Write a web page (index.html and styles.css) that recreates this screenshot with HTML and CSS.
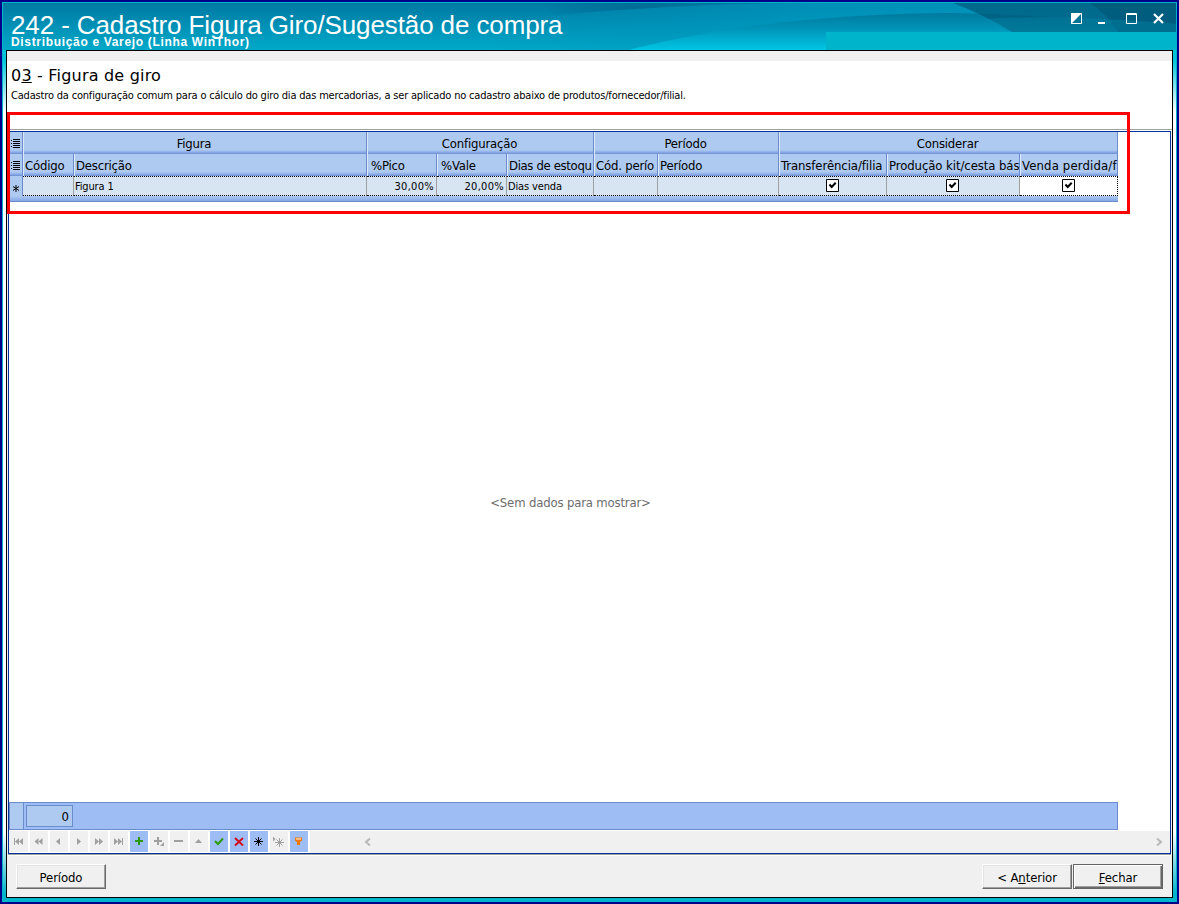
FILE: index.html
```html
<!DOCTYPE html>
<html lang="pt-BR">
<head>
    <meta charset="UTF-8">
    <title>242 - Cadastro Figura Giro/Sugestão de compra</title>
    <link rel="stylesheet" href="styles.css">
</head>
<body>
<div class="window">
    <header class="titlebar">
        <svg class="waves" width="1173" height="47" viewBox="3 3 1173 47">
            <defs>
                <linearGradient id="base" x1="0" y1="0" x2="0" y2="1">
                    <stop offset="0" stop-color="#0079a3"/>
                    <stop offset="1" stop-color="#00a9c9"/>
                </linearGradient>
                <linearGradient id="low" x1="0" y1="0" x2="0" y2="1">
                    <stop offset="0" stop-color="#007a9e"/>
                    <stop offset="0.4" stop-color="#0092b6"/>
                    <stop offset="1" stop-color="#00c6e4"/>
                </linearGradient>
                <linearGradient id="shade" x1="0" y1="0" x2="1" y2="0">
                    <stop offset="0" stop-color="#006a92" stop-opacity="0"/>
                    <stop offset="0.35" stop-color="#006a92" stop-opacity="0.8"/>
                    <stop offset="1" stop-color="#006a92" stop-opacity="0"/>
                </linearGradient>
                <linearGradient id="fade" x1="0" y1="0" x2="1" y2="0">
                    <stop offset="0" stop-color="#0093bb" stop-opacity="0"/>
                    <stop offset="0.5" stop-color="#0099c0"/>
                </linearGradient>
            </defs>
            <rect x="3" y="3" width="1173" height="47" fill="url(#base)"/>
            <path d="M480 50 L560 15 Q680 3 800 3 H1176 V50 Z" fill="url(#fade)" opacity="0.7"/>
            <path d="M540 3 H800 Q680 4 555 15 Z" fill="url(#shade)"/>
            <path d="M628 50 Q770 14 950 13 Q1060 14 1176 32 V50 Z" fill="url(#low)"/>
            <path d="M953 3 Q985 15 1012 32 H1176 V3 Z" fill="#00506f" opacity="0.6"/>
            <path d="M1090 3 Q1107 14 1118 32 H1176 V3 Z" fill="#00506f" opacity="0.5"/>
            <path d="M985 19 Q1060 14 1176 24 V32 H1012 Z" fill="#0090b0" opacity="0.35"/>
            <rect x="826" y="32" width="350" height="18" fill="#00b4cc"/>
        </svg>
        <div class="caption">
            <h1>242 - Cadastro Figura Giro/Sugestão de compra</h1>
            <p>Distribuição e Varejo (Linha WinThor)</p>
        </div>
        <svg class="controls" width="96" height="13" viewBox="0 0 96 13" fill="none" stroke="#fff">
            <path d="M.5 1.500h10v10h-10z"/>
            <path d="M0 1h11L0 12z" fill="#fff" stroke="none"/>
            <path d="M27 11h7" stroke-width="2"/>
            <path d="M55.500 1.500h10v10h-10zM55 2.500h11"/>
            <path d="M83 2l9 9M92 2l-9 9" stroke-width="2.200"/>
        </svg>
    </header>

    <main class="client">
        <div class="strip"></div>
        <section class="intro">
            <h2>0<u>3</u> - Figura de giro</h2>
            <p>Cadastro da configuração comum para o cálculo do giro dia das mercadorias, a ser aplicado no cadastro abaixo de produtos/fornecedor/filial.</p>
        </section>

        <section class="grid">
            <div class="bands row">
                <div class="mark"><svg width="9" height="9" shape-rendering="crispEdges"><path d="M2 .5h7M2 2.500h7M2 4.500h7M2 6.500h7M2 8.500h7M0 1.500h1M0 4.500h1M0 7.500h1" stroke="#000"/></svg></div>
                <div class="span2">Figura</div>
                <div class="span3">Configuração</div>
                <div class="span2">Período</div>
                <div class="span3">Considerar</div>
            </div>
            <div class="heads row">
                <div class="mark"><svg width="9" height="9" shape-rendering="crispEdges"><path d="M2 .5h7M2 2.500h7M2 4.500h7M2 6.500h7M2 8.500h7M0 1.500h1M0 4.500h1M0 7.500h1" stroke="#000"/></svg></div>
                <div>Código</div>
                <div>Descrição</div>
                <div class="percent">%Pico</div>
                <div class="percent">%Vale</div>
                <div class="narrow">Dias de estoqu</div>
                <div>Cód. perío</div>
                <div>Período</div>
                <div class="wide">Transferência/filia</div>
                <div class="wide">Produção kit/cesta bás</div>
                <div class="wider">Venda perdida/f</div>
            </div>
            <div class="data row">
                <div class="mark"><svg width="6" height="7" viewBox="0 0 6 7"><path d="M3 0v7M0 1.500l6 4M6 1.500l-6 4" stroke="#000"/></svg></div>
                <div></div>
                <div>Figura 1</div>
                <div class="num">30,00%</div>
                <div class="num">20,00%</div>
                <div>Dias venda</div>
                <div></div>
                <div></div>
                <div class="check"><svg width="13" height="13"><path d="M.5 .5h12v12h-12z" fill="#fff" stroke="#000"/><path d="M3.500 5.500l2.200 2.500l4-4.200" fill="none" stroke="#000" stroke-width="2"/></svg></div>
                <div class="check"><svg width="13" height="13"><path d="M.5 .5h12v12h-12z" fill="#fff" stroke="#000"/><path d="M3.500 5.500l2.200 2.500l4-4.200" fill="none" stroke="#000" stroke-width="2"/></svg></div>
                <div class="check focused"><svg width="13" height="13"><path d="M.5 .5h12v12h-12z" fill="#fff" stroke="#000"/><path d="M3.500 5.500l2.200 2.500l4-4.200" fill="none" stroke="#000" stroke-width="2"/></svg></div>
            </div>
            <div class="newrow-end"></div>

            <div class="empty"><span>&lt;Sem dados para mostrar&gt;</span></div>

            <div class="summary">
                <div class="summary-mark"></div>
                <div class="count">0</div>
            </div>

            <div class="navigator">
                <div class="nav-btn"><svg viewBox="0 0 18 21"><path class="line" d="M4.500 7v7"/><path d="M9 7v7l-4-3.500zM13 7v7l-4-3.500z"/></svg></div>
                <div class="nav-btn"><svg viewBox="0 0 18 21"><path d="M8.500 7v7l-4-3.500zM12.500 7v7l-4-3.500z"/></svg></div>
                <div class="nav-btn"><svg viewBox="0 0 18 21"><path d="M10 7v7l-4-3.500z"/></svg></div>
                <div class="nav-btn"><svg viewBox="0 0 18 21"><path d="M7 7v7l4-3.500z"/></svg></div>
                <div class="nav-btn"><svg viewBox="0 0 18 21"><path d="M5 7v7l4-3.500zM9 7v7l4-3.500z"/></svg></div>
                <div class="nav-btn"><svg viewBox="0 0 18 21"><path d="M4 7v7l4-3.500zM8 7v7l4-3.500z"/><path class="line" d="M12.500 7v7"/></svg></div>
                <div class="nav-btn on"><svg viewBox="0 0 18 21"><path class="green" d="M9 6v8M5 10h8"/></svg></div>
                <div class="nav-btn"><svg viewBox="0 0 18 21"><path class="thick" d="M8 6v8M4 10h8"/><path d="M14 11v4h-4z"/></svg></div>
                <div class="nav-btn"><svg viewBox="0 0 18 21"><path class="thick" d="M4 10h9"/></svg></div>
                <div class="nav-btn"><svg viewBox="0 0 18 21"><path d="M5 12h7l-3.500-4z"/></svg></div>
                <div class="nav-btn on"><svg viewBox="0 0 18 21"><path class="green" d="M5 10l3 3l5-5.500"/></svg></div>
                <div class="nav-btn on"><svg viewBox="0 0 18 21"><path class="red" d="M5 7l8 7.500M13 7l-8 7.500"/></svg></div>
                <div class="nav-btn on"><svg viewBox="0 0 18 21"><path class="line star" d="M8.500 6v9M4 10.500h9M5.500 7.500l6 6M11.500 7.500l-6 6"/></svg></div>
                <div class="nav-btn"><svg viewBox="0 0 18 21"><path d="M3 5.500v5l2.500-2.500z"/><path class="line" d="M9.500 7v9M5 11.500h9M6.500 8.500l6 6M12.500 8.500l-6 6"/></svg></div>
                <div class="nav-btn on"><svg viewBox="0 0 18 21"><path class="filter" d="M5 6.500h7v3l-2 1.500v3h-3v-3l-2-1.500z"/><path class="line shine" d="M6 8h5"/></svg></div>
                <div class="scroll">
                    <svg width="7" height="8"><path d="M6 .5l-4 3.500l4 3.500"/></svg>
                    <svg width="7" height="8"><path d="M1 .5l4 3.500l-4 3.500"/></svg>
                </div>
            </div>
        </section>

        <footer class="actions">
            <button type="button">Período</button>
            <div class="steps">
                <button type="button">&lt; A<u>n</u>terior</button>
                <button type="button" class="default"><u>F</u>echar</button>
            </div>
        </footer>
    </main>
    <div class="highlight"></div>
</div>
</body>
</html>
```
FILE: styles.css
```css
/* General Styles */
* {
    box-sizing: border-box;
}

body {
    margin: 0;
    font-family: "DejaVu Sans Condensed", "DejaVu Sans", sans-serif;
    font-size: 12px;
    color: #000;
}

h1, h2, p {
    margin: 0;
    font-weight: normal;
    white-space: nowrap;
}

u {
    text-underline-offset: 1px;
    text-decoration-skip-ink: none;
}

/* Window Frame */
.window {
    position: relative;
    width: 1179px;
    height: 904px;
    border: 2px solid #000088;
    background: linear-gradient(#00b4cc 0, #00c8dc 58px, #ffffff 110px, #ffffff 830px, #00b4cc 892px);
    box-shadow: inset 0 0 0 1px #00b4cc;
    padding: 1px 4px 4px;
    display: flex;
    flex-direction: column;
}

/* Title Bar */
.titlebar {
    position: relative;
    height: 47px;
    flex: none;
    display: flex;
    justify-content: space-between;
    color: #fff;
    font-family: "Liberation Sans", Arial, sans-serif;
}

.waves {
    position: absolute;
    left: -3px;
    top: 0;
}

.caption {
    position: relative;
    padding: 8px 0 0 5px;
}

.caption h1 {
    font-size: 26px;
    line-height: 28px;
    letter-spacing: -0.11px;
}

.caption p {
    font-size: 12px;
    font-weight: bold;
    line-height: 14px;
    margin-top: -4px;
    letter-spacing: 0.67px;
}

.controls {
    position: relative;
    margin: 9px 6px 0 0;
}

/* Client Area */
.client {
    flex: 1;
    border: 1px solid #000;
    background-color: #f0f0f0;
    display: flex;
    flex-direction: column;
    min-height: 0;
}

.strip {
    height: 10px;
    flex: none;
}

.intro {
    height: 70px;
    flex: none;
    background: linear-gradient(#a0a0a0, #a0a0a0) 0 68px / 100% 1px no-repeat #fff;
    padding: 5px 0 0 4px;
}

.intro h2 {
    font-family: "DejaVu Sans", sans-serif;
    font-size: 16px;
    line-height: 20px;
    letter-spacing: 0.2px;
}

.intro p {
    font-size: 11px;
    line-height: 14px;
    margin-top: 3px;
    letter-spacing: -0.185px;
}

/* Data Grid */
.grid {
    height: 723px;
    flex: none;
    margin: 0 1px;
    border: 1px solid #003399;
    box-shadow: 0 1px 0 #a0a0a0, 0 2px 0 #fff;
    background-color: #fff;
    display: flex;
    flex-direction: column;
}

.row {
    display: grid;
    grid-template-columns: 14px 51px 293px 70px 70px 87px 64px 121px 108px 133px 98px;
    width: 1109px;
    flex: none;
}

.row > div {
    border-right: 1px solid #6a8ccb;
    white-space: nowrap;
    overflow: hidden;
    min-width: 0;
}

.span2 {
    grid-column: span 2;
}

.span3 {
    grid-column: span 3;
}

.bands > div,
.heads > div {
    height: 22px;
    line-height: 24px;
    font-size: 13px;
    letter-spacing: -0.2px;
    background: linear-gradient(#aecaf0 18px, #9ebcf0 19px, #7ea0e0 21px, #6a8ccb 22px);
    box-shadow: inset 1px 0 0 #dce9fb;
}

.bands > div {
    text-align: center;
    padding-right: 1px;
}

.heads > div {
    padding: 0 0 0 2px;
}

.heads .percent {
    padding-left: 4px;
}

.heads .narrow {
    letter-spacing: -0.35px;
}

.heads .wide {
    letter-spacing: -0.08px;
}

.heads .wider {
    letter-spacing: 0.15px;
}

.row .mark {
    display: flex;
    align-items: center;
    justify-content: center;
    padding: 0;
    background-color: #aecaf0;
    box-shadow: none;
}

.data > div {
    height: 20px;
    line-height: 19px;
    font-size: 11px;
    letter-spacing: -0.15px;
    padding: 0 2px 0 1px;
    background-color: #d7e4f2;
    border-right-color: #a0a0a0;
    border-top: 1px dotted #000;
    border-bottom: 1px dotted #000;
}

.data > .mark {
    border-top: none;
    border-bottom: none;
    border-right-color: #6a8ccb;
    padding-top: 4px;
}

.data .num {
    text-align: right;
    letter-spacing: 0.3px;
}

.data .check {
    display: flex;
    align-items: center;
    justify-content: center;
    padding: 0 1px 1px 0;
}

.data .focused {
    background-color: #fff;
    border-right: 1px dotted #000;
}

.newrow-end {
    width: 1109px;
    height: 6px;
    flex: none;
    background: linear-gradient(#aecaf0, #86a8e6);
    border-bottom: 1px solid #6a8ccb;
}

.empty {
    flex: 1;
    display: flex;
    align-items: center;
    justify-content: center;
    color: #6d6d6d;
    font-size: 13px;
    letter-spacing: -0.17px;
    padding: 0 38px 0 0;
}

/* Summary Footer */
.summary {
    width: 1109px;
    height: 28px;
    flex: none;
    display: flex;
    align-items: center;
    gap: 2px;
    background-color: #9fbdf5;
    border: 1px solid #6a8ccb;
}

.summary-mark {
    width: 14px;
    align-self: stretch;
    background-color: #aecaf0;
    border-right: 1px solid #6a8ccb;
}

.count {
    width: 47px;
    height: 22px;
    line-height: 21px;
    padding-right: 3px;
    text-align: right;
    font-size: 13px;
    background-color: #aecaf0;
    border: 1px solid #6a8ccb;
}

/* Record Navigator */
.navigator {
    height: 23px;
    flex: none;
    display: flex;
    background-color: #f0f0f0;
    border-top: 1px solid #fff;
    padding-left: 1px;
}

.nav-btn {
    width: 20px;
    height: 22px;
    border-right: 2px solid #fff;
    border-bottom: 1px solid #fff;
}

.nav-btn.on {
    background-color: #9fbdf5;
}

.nav-btn svg {
    display: block;
    width: 18px;
    height: 21px;
    fill: #a0a0a0;
}

.nav-btn .line {
    fill: none;
    stroke: #a0a0a0;
    stroke-width: 1;
}

.nav-btn .thick {
    stroke: #a0a0a0;
    stroke-width: 2;
}

.nav-btn .green {
    fill: none;
    stroke: #2c9a0c;
    stroke-width: 2;
}

.nav-btn .red {
    stroke: #d01020;
    stroke-width: 2;
}

.nav-btn .star {
    stroke: #000;
}

.nav-btn .filter {
    fill: #f07800;
}

.nav-btn .shine {
    stroke: #fff;
}

.scroll {
    flex: 1;
    display: flex;
    align-items: center;
    justify-content: space-between;
    padding: 0 7px 0 54px;
}

.scroll path {
    fill: none;
    stroke: #b8b8b8;
    stroke-width: 2;
}

/* Bottom Buttons */
.actions {
    flex: 1;
    display: flex;
    justify-content: space-between;
    align-items: flex-start;
    padding: 10px 9px 0;
}

.steps {
    display: flex;
    gap: 1px;
}

button {
    width: 90px;
    height: 25px;
    padding: 1px 0 0;
    font-family: inherit;
    font-size: 13px;
    letter-spacing: -0.1px;
    color: #000;
    background-color: #f0f0f0;
    border: 1px solid;
    border-color: #fff #696969 #696969 #fff;
    box-shadow: inset -1px -1px 0 #a0a0a0, inset 1px 1px 0 #e3e3e3;
}

button.default {
    border-color: #646464;
    box-shadow: inset 1px 1px 0 #fff, inset -1px -1px 0 #696969, inset -2px -2px 0 #a0a0a0;
}

/* Red Highlight */
.highlight {
    position: absolute;
    left: 5px;
    top: 110px;
    width: 1123px;
    height: 102px;
    border: 3px solid #ff0000;
}
```
